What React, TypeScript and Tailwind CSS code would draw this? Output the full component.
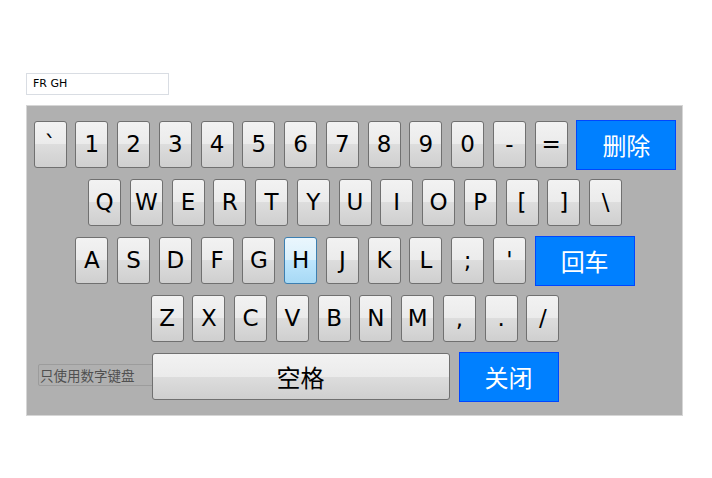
import React from 'react';

const ROW1 = ['`', '1', '2', '3', '4', '5', '6', '7', '8', '9', '0', '-', '='];
const ROW2 = ['Q', 'W', 'E', 'R', 'T', 'Y', 'U', 'I', 'O', 'P', '[', ']', '\\'];
const ROW3 = ['A', 'S', 'D', 'F', 'G', 'H', 'J', 'K', 'L', ';', "'"];
const ROW4 = ['Z', 'X', 'C', 'V', 'B', 'N', 'M', ',', '.', '/'];

const HOVER_KEY = 'H';

const keyBase =
  'h-[47px] shrink-0 rounded-[3px] border flex items-center justify-center text-black text-[23px] leading-none';
const keyIdle =
  'border-[#707070] bg-[linear-gradient(to_bottom,#f2f2f2_0%,#ebebeb_50%,#dddddd_50%,#cfcfcf_100%)]';
const keyHot =
  'border-[#3c7fb1] bg-[linear-gradient(to_bottom,#eaf6fd_0%,#d9f0fc_50%,#bee6fd_50%,#a7d9f5_100%)]';
const blueBtn =
  'h-[50px] -my-[1.5px] w-[100px] shrink-0 border border-[#0046ff] bg-[#0080ff] text-white text-[24px] flex items-center justify-center';

function Key({ label }: { label: string }) {
  const hot = label === HOVER_KEY;
  return <div className={`${keyBase} w-[33px] ${hot ? keyHot : keyIdle}`}>{label}</div>;
}

export default function App() {
  return (
    <div
      className="w-[712px] h-[478px] bg-white pt-[73px] pl-[26px]"
      style={{ fontFamily: '"DejaVu Sans", Tahoma, "Noto Sans CJK SC", sans-serif' }}
    >
      {/* 输入框 */}
      <div className="w-[143px] h-[22px] border border-[#d9dde3] flex items-center pl-[6px] text-[11px] text-black">
        FR GH
      </div>

      {/* 键盘面板 */}
      <div className="mt-[10px] w-[657px] h-[311px] bg-[#b0b0b0] border border-[#d6d6d6] pt-[15px] flex flex-col gap-[11px]">
        <div className="flex justify-center gap-[8.75px] pl-[1px]">
          {ROW1.map(k => <Key key={k} label={k} />)}
          <div className={blueBtn} style={{ fontFamily: '"Noto Sans CJK SC", sans-serif' }}>删除</div>
        </div>
        <div className="flex justify-center gap-[8.75px] pl-[1px]">
          {ROW2.map(k => <Key key={k} label={k} />)}
        </div>
        <div className="flex justify-center gap-[8.75px] pl-[1px]">
          {ROW3.map(k => <Key key={k} label={k} />)}
          <div className={blueBtn} style={{ fontFamily: '"Noto Sans CJK SC", sans-serif' }}>回车</div>
        </div>
        <div className="flex justify-center gap-[8.75px] pl-[1px]">
          {ROW4.map(k => <Key key={k} label={k} />)}
        </div>
        <div className="relative flex justify-center gap-[9px] pl-[1px]">
          {/* 只使用数字键盘 */}
          <div
            className="absolute left-[11px] top-[11px] w-[130px] h-[22px] border border-[#9c9c9c] rounded-[2px] flex items-center pl-[1px] text-[13.5px] text-[#505050]"
            style={{ fontFamily: '"Noto Sans CJK SC", sans-serif' }}
          >
            只使用数字键盘
          </div>
          <div
            className={`${keyBase} ${keyIdle} relative w-[298px] text-[24px]`}
            style={{ fontFamily: '"Noto Sans CJK SC", sans-serif' }}
          >
            空格
          </div>
          <div className={blueBtn} style={{ fontFamily: '"Noto Sans CJK SC", sans-serif' }}>关闭</div>
        </div>
      </div>
    </div>
  );
}
